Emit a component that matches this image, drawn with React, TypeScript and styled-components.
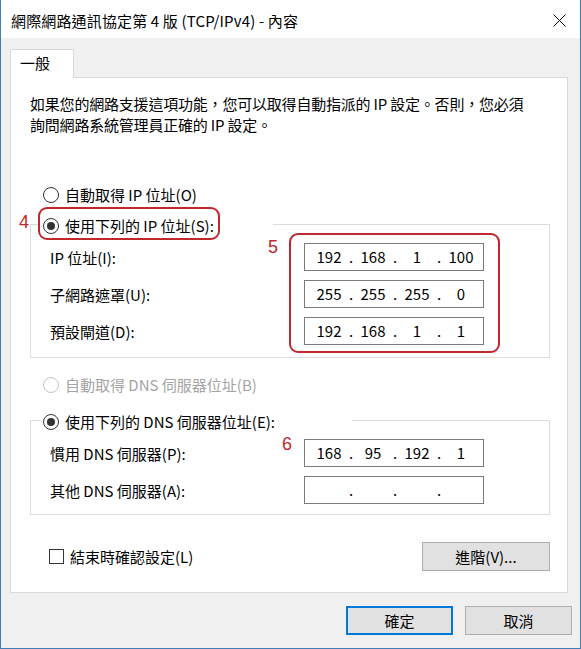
import React, {FC} from "react";
import styled, {createGlobalStyle} from "styled-components";

const FONT = `"Noto Sans CJK TC", "Noto Sans", sans-serif`;

const colors = {
    text: "#000000",
    disabled: "#a3a3a3",
    face: "#f0f0f0",
    tabLine: "#d9d9d9",
    groupLine: "#dcdcdc",
    field: "#7a7a7a",
    mark: "#c1272d",
    accent: "#0078d7",
    frame: "#3f7fb5",
    button: "#e1e1e1",
    buttonLine: "#adadad",
};

const GlobalStyle = createGlobalStyle`
  html, body {
    margin: 0;
    padding: 0;
    background: #ffffff;
  }
  body {
    font-family: ${FONT};
    font-size: 15px;
    color: ${colors.text};
  }
  * {
    box-sizing: border-box;
  }
`;

const Window = styled.div`
  width: 581px;
  height: 649px;
  display: flex;
  flex-direction: column;
  border: 1px solid ${colors.frame};
  border-top: none;
  background: ${colors.face};
  overflow: hidden;
`;

const TitleBar = styled.div`
  flex: none;
  height: 38px;
  display: flex;
  align-items: center;
  justify-content: space-between;
  padding: 3px 14px 0 10px;
  background: #ffffff;
`;

const Title = styled.div`
  font-size: 15px;
  line-height: 20px;
  white-space: nowrap;
  letter-spacing: 0.15px;
`;

const Body = styled.div`
  flex: 1;
  display: flex;
  flex-direction: column;
  padding: 11px 10px 0 9px;
`;

const TabStrip = styled.div`
  display: flex;
`;

const Tab = styled.div`
  position: relative;
  z-index: 1;
  width: 64px;
  height: 29px;
  margin-bottom: -1px;
  padding: 3px 0 0 9px;
  line-height: 20px;
  background: #ffffff;
  border: 1px solid ${colors.tabLine};
  border-bottom: none;
`;

const Panel = styled.div`
  height: 516px;
  margin-right: 2px;
  display: flex;
  flex-direction: column;
  padding: 15px 17px 0 19px;
  background: #ffffff;
  border: 1px solid ${colors.tabLine};
`;

const Description = styled.p`
  margin: 0;
  line-height: 21px;
  white-space: nowrap;
  letter-spacing: -0.2px;
`;

const OptionRow = styled.div<{ $top: number }>`
  display: flex;
  align-items: center;
  height: 20px;
  margin-top: ${p => p.$top}px;
  padding-left: 13px;
`;

const OptionLabel = styled.span<{ $disabled?: boolean }>`
  position: relative;
  display: inline-flex;
  align-items: center;
  gap: 6px;
  height: 20px;
  line-height: 20px;
  white-space: nowrap;
  color: ${p => (p.$disabled ? colors.disabled : colors.text)};
`;

const RadioMark = styled.span<{ $checked?: boolean; $disabled?: boolean }>`
  flex: none;
  width: 16px;
  height: 16px;
  display: grid;
  place-items: center;
  border-radius: 50%;
  border: 1px solid ${p => (p.$disabled ? "#c4c4c4" : "#333333")};
  background: #ffffff;

  &::after {
    content: "";
    display: ${p => (p.$checked ? "block" : "none")};
    width: 8px;
    height: 8px;
    border-radius: 50%;
    background: #333333;
  }
`;

const CheckMark = styled.span`
  flex: none;
  width: 15px;
  height: 15px;
  border: 1px solid #333333;
  background: #ffffff;
`;

const Ring = styled.span<{ $inset: string }>`
  position: absolute;
  inset: ${p => p.$inset};
  border: 2px solid ${colors.mark};
  border-radius: 9px;
  pointer-events: none;
`;

const Badge = styled.span<{ $x: number; $y: number }>`
  position: absolute;
  left: ${p => p.$x}px;
  top: ${p => p.$y}px;
  font-family: "Liberation Sans", Arial, sans-serif;
  font-size: 18px;
  line-height: 1;
  color: ${colors.mark};
`;

const Group = styled.fieldset<{ $top: number }>`
  margin: ${p => p.$top}px 0 0;
  padding: 0;
  min-width: 0;
  border: 1px solid ${colors.groupLine};
`;

const Legend = styled.legend<{ $width: number }>`
  width: ${p => p.$width}px;
  height: 20px;
  margin-left: 9px;
  padding: 0 0 0 3px;
  line-height: 20px;
`;

const GroupBody = styled.div<{ $bottom: number }>`
  display: flex;
  padding: 9px 0 ${p => p.$bottom}px 19px;
`;

const LabelColumn = styled.div`
  width: 254px;
  display: flex;
  flex-direction: column;
  gap: 9px;
`;

const FieldLabel = styled.div`
  height: 28px;
  display: flex;
  align-items: center;
  white-space: nowrap;
`;

const FieldColumn = styled.div`
  position: relative;
  display: flex;
  flex-direction: column;
  gap: 9px;
`;

const IpBox = styled.div`
  width: 180px;
  height: 28px;
  display: flex;
  align-items: center;
  padding-left: 4px;
  background: #ffffff;
  border: 1px solid ${colors.field};
`;

const Octet = styled.span`
  width: 40px;
  text-align: center;
  line-height: 20px;
`;

const Dot = styled.span`
  width: 4px;
  text-align: center;
  line-height: 20px;
`;

const BottomRow = styled.div`
  display: flex;
  align-items: center;
  justify-content: space-between;
  margin-top: 27px;
  padding-left: 19px;
`;

const CheckRow = styled.label`
  display: flex;
  align-items: center;
  gap: 6px;
  line-height: 20px;
  white-space: nowrap;
`;

const Button = styled.button<{ $width: number; $primary?: boolean }>`
  width: ${p => p.$width}px;
  height: 29px;
  padding: 0;
  font-family: ${FONT};
  font-size: 15px;
  line-height: 20px;
  color: ${colors.text};
  background: ${colors.button};
  border: ${p => (p.$primary ? `2px solid ${colors.accent}` : `1px solid ${colors.buttonLine}`)};
`;

const Footer = styled.div`
  display: flex;
  justify-content: flex-end;
  gap: 12px;
  margin: 13px -2px 0 0;
`;

interface IFieldRow {
    label: string;
    octets: string[];
}

const ipRows: IFieldRow[] = [
    {label: "IP 位址(I):", octets: ["192", "168", "1", "100"]},
    {label: "子網路遮罩(U):", octets: ["255", "255", "255", "0"]},
    {label: "預設閘道(D):", octets: ["192", "168", "1", "1"]},
];

const dnsRows: IFieldRow[] = [
    {label: "慣用 DNS 伺服器(P):", octets: ["168", "95", "192", "1"]},
    {label: "其他 DNS 伺服器(A):", octets: ["", "", "", ""]},
];

const IpField: FC<{ octets: string[] }> = ({octets}) => (
    <IpBox>
        {octets.map((octet, i) => (
            <React.Fragment key={i}>
                <Octet>{octet}</Octet>
                {i < 3 && <Dot>.</Dot>}
            </React.Fragment>
        ))}
    </IpBox>
);

const CloseIcon = () => (
    <svg width="13" height="13" viewBox="0 0 13 13" fill="none">
        <path d="M0.5 0.5 L12.5 12.5 M12.5 0.5 L0.5 12.5" stroke="#000" strokeWidth="1"/>
    </svg>
);

interface IFieldGroupProps {
    rows: IFieldRow[];
    bottom: number;
    ring?: string;
    badge?: { text: string; x: number; y: number };
}

const FieldGroupBody: FC<IFieldGroupProps> = ({rows, bottom, ring, badge}) => (
    <GroupBody $bottom={bottom}>
        <LabelColumn>
            {rows.map(row => <FieldLabel key={row.label}>{row.label}</FieldLabel>)}
        </LabelColumn>
        <FieldColumn>
            {rows.map(row => <IpField key={row.label} octets={row.octets}/>)}
            {ring && <Ring $inset={ring}/>}
            {badge && <Badge $x={badge.x} $y={badge.y}>{badge.text}</Badge>}
        </FieldColumn>
    </GroupBody>
);

const App: FC = () => (
    <>
        <GlobalStyle/>
        <Window>
            <TitleBar>
                <Title>網際網路通訊協定第 4 版 (TCP/IPv4) - 內容</Title>
                <CloseIcon/>
            </TitleBar>
            <Body>
                <TabStrip>
                    <Tab>一般</Tab>
                </TabStrip>
                <Panel>
                    <Description>
                        如果您的網路支援這項功能，您可以取得自動指派的 IP 設定。否則，您必須<br/>
                        詢問網路系統管理員正確的 IP 設定。
                    </Description>

                    <OptionRow $top={50}>
                        <OptionLabel>
                            <RadioMark/>
                            自動取得 IP 位址(O)
                        </OptionLabel>
                    </OptionRow>

                    <Group $top={9}>
                        <Legend $width={233}>
                            <OptionLabel>
                                <RadioMark $checked/>
                                使用下列的 IP 位址(S):
                                <Ring $inset="-9px -6px -4px -5px"/>
                                <Badge $x={-24} $y={-3}>4</Badge>
                            </OptionLabel>
                        </Legend>
                        <FieldGroupBody
                            rows={ipRows}
                            bottom={12}
                            ring="-10px -16px -8px -15px"
                            badge={{text: "5", x: -36, y: -5}}
                        />
                    </Group>

                    <OptionRow $top={17}>
                        <OptionLabel $disabled>
                            <RadioMark $disabled/>
                            自動取得 DNS 伺服器位址(B)
                        </OptionLabel>
                    </OptionRow>

                    <Group $top={15}>
                        <Legend $width={312}>
                            <OptionLabel>
                                <RadioMark $checked/>
                                使用下列的 DNS 伺服器位址(E):
                            </OptionLabel>
                        </Legend>
                        <FieldGroupBody
                            rows={dnsRows}
                            bottom={10}
                            badge={{text: "6", x: -22, y: -4}}
                        />
                    </Group>

                    <BottomRow>
                        <CheckRow>
                            <CheckMark/>
                            結束時確認設定(L)
                        </CheckRow>
                        <Button $width={128}>進階(V)...</Button>
                    </BottomRow>
                </Panel>
                <Footer>
                    <Button $width={107} $primary>確定</Button>
                    <Button $width={107}>取消</Button>
                </Footer>
            </Body>
        </Window>
    </>
);

export default App;
